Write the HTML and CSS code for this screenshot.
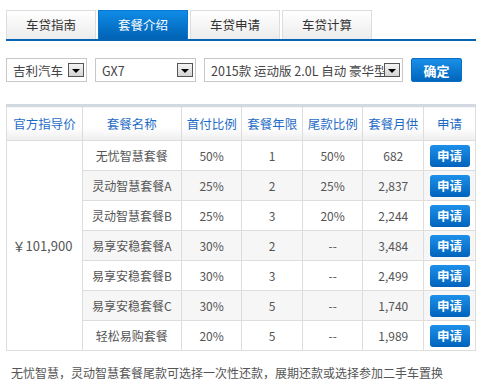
FILE: index.html
```html
<!DOCTYPE html>
<html lang="zh-CN">
<head>
    <meta charset="UTF-8">
    <title>车贷 - 套餐介绍</title>
    <link rel="stylesheet" href="styles.css">
</head>
<body>
    <div class="loan-box">
        <!-- Tabs -->
        <div class="tabs">
            <div class="tab">车贷指南</div>
            <div class="tab active">套餐介绍</div>
            <div class="tab">车贷申请</div>
            <div class="tab">车贷计算</div>
        </div>

        <!-- Car filter -->
        <div class="filter">
            <div class="select w-brand"><span class="select-text">吉利汽车</span><span class="arrow"></span></div>
            <div class="select w-series"><span class="select-text">GX7</span><span class="arrow"></span></div>
            <div class="select w-model"><span class="select-text">2015款 运动版 2.0L 自动 豪华型</span><span class="arrow"></span></div>
            <button class="confirm">确定</button>
        </div>

        <!-- Packages -->
        <table class="plans">
            <thead>
                <tr>
                    <th class="c-price">官方指导价</th>
                    <th class="c-name">套餐名称</th>
                    <th class="c-pct">首付比例</th>
                    <th class="c-pct">套餐年限</th>
                    <th class="c-pct">尾款比例</th>
                    <th class="c-pct">套餐月供</th>
                    <th class="c-apply">申请</th>
                </tr>
            </thead>
            <tbody>
                <tr>
                    <td class="price" rowspan="7">￥101,900</td>
                    <td>无忧智慧套餐</td><td>50%</td><td>1</td><td>50%</td><td>682</td>
                    <td><button class="apply">申请</button></td>
                </tr>
                <tr class="alt">
                    <td>灵动智慧套餐A</td><td>25%</td><td>2</td><td>25%</td><td>2,837</td>
                    <td><button class="apply">申请</button></td>
                </tr>
                <tr>
                    <td>灵动智慧套餐B</td><td>25%</td><td>3</td><td>20%</td><td>2,244</td>
                    <td><button class="apply">申请</button></td>
                </tr>
                <tr class="alt">
                    <td>易享安稳套餐A</td><td>30%</td><td>2</td><td>--</td><td>3,484</td>
                    <td><button class="apply">申请</button></td>
                </tr>
                <tr>
                    <td>易享安稳套餐B</td><td>30%</td><td>3</td><td>--</td><td>2,499</td>
                    <td><button class="apply">申请</button></td>
                </tr>
                <tr class="alt">
                    <td>易享安稳套餐C</td><td>30%</td><td>5</td><td>--</td><td>1,740</td>
                    <td><button class="apply">申请</button></td>
                </tr>
                <tr>
                    <td>轻松易购套餐</td><td>20%</td><td>5</td><td>--</td><td>1,989</td>
                    <td><button class="apply">申请</button></td>
                </tr>
            </tbody>
        </table>

        <p class="note">无忧智慧，灵动智慧套餐尾款可选择一次性还款，展期还款或选择参加二手车置换</p>
    </div>
</body>
</html>
```

FILE: styles.css
```css
body {
    margin: 0;
    padding: 0;
    background: #ffffff;
    font-family: "Noto Sans CJK SC", "Liberation Sans", sans-serif;
    color: #555555;
}

.loan-box {
    width: 470px;
    padding: 10px 0 0 6px;
}

/* Tabs */
.tabs {
    display: flex;
    gap: 2px;
    border-bottom: 2px solid #0565b4;
}

.tab {
    width: 88px;
    height: 28px;
    line-height: 28px;
    border: 1px solid #dddddd;
    border-bottom: 0;
    background: linear-gradient(#ffffff, #ececec);
    text-align: center;
    font-size: 12.5px;
    color: #333333;
}

.tab.active {
    border-color: #0a78d0;
    background: linear-gradient(#0f8ce6, #0062b4);
    color: #ffffff;
}

/* Filter */
.filter {
    display: flex;
    gap: 8px;
    margin-top: 17px;
}

.select {
    height: 22px;
    border: 1px solid #c8c8c8;
    display: flex;
    align-items: center;
    padding: 0 2px 0 6px;
    font-size: 12.5px;
    color: #444444;
    overflow: hidden;
}

.select-text {
    flex: 1;
    white-space: nowrap;
    overflow: hidden;
}

.w-brand { width: 71px; }
.w-series { width: 91px; }
.w-model { width: 189px; }

.arrow {
    width: 14px;
    height: 12px;
    border: 1px solid #555555;
    background: linear-gradient(#f4f4f4, #d4d4d4);
    position: relative;
    flex: none;
}

.arrow::after {
    content: "";
    position: absolute;
    left: 3px;
    top: 5px;
    border-left: 4px solid transparent;
    border-right: 4px solid transparent;
    border-top: 4px solid #000000;
}

.confirm {
    width: 51px;
    height: 24px;
    border: 1px solid #0a6dc2;
    border-radius: 2px;
    background: linear-gradient(#1a8fe8, #0066bc);
    color: #ffffff;
    font-family: inherit;
    font-size: 13px;
    font-weight: bold;
    padding: 0;
}

/* Table */
.plans {
    width: 470px;
    margin-top: 22px;
    border-collapse: collapse;
    border-top: 3px solid #d2d9e1;
    font-size: 12px;
}

.plans th,
.plans td {
    border: 1px solid #dddddd;
    text-align: center;
    padding: 0;
    line-height: 16px;
}

.plans th {
    height: 33px;
    font-weight: normal;
    font-size: 12.5px;
    color: #1f6cc6;
    background: linear-gradient(#ffffff 60%, #eeeeee);
}

.plans td {
    height: 29px;
    color: #555555;
}

.plans tr.alt td {
    background: #f6f6f6;
}

.plans td.price {
    background: #ffffff;
    font-size: 13px;
    padding-right: 4px;
}

.c-price { width: 75px; }
.c-name { width: 99px; }
.c-pct { width: 60px; }
.c-apply { width: 51px; }

.apply {
    width: 40px;
    height: 22px;
    border: 0;
    border-radius: 3px;
    background: linear-gradient(#1d90ea, #0063bb);
    color: #ffffff;
    font-family: inherit;
    font-size: 12.5px;
    font-weight: bold;
    padding: 0;
    display: block;
    margin: 0 auto;
}

.note {
    margin: 13px 0 0 5px;
    font-size: 12px;
    line-height: 18px;
    color: #555555;
}
```
